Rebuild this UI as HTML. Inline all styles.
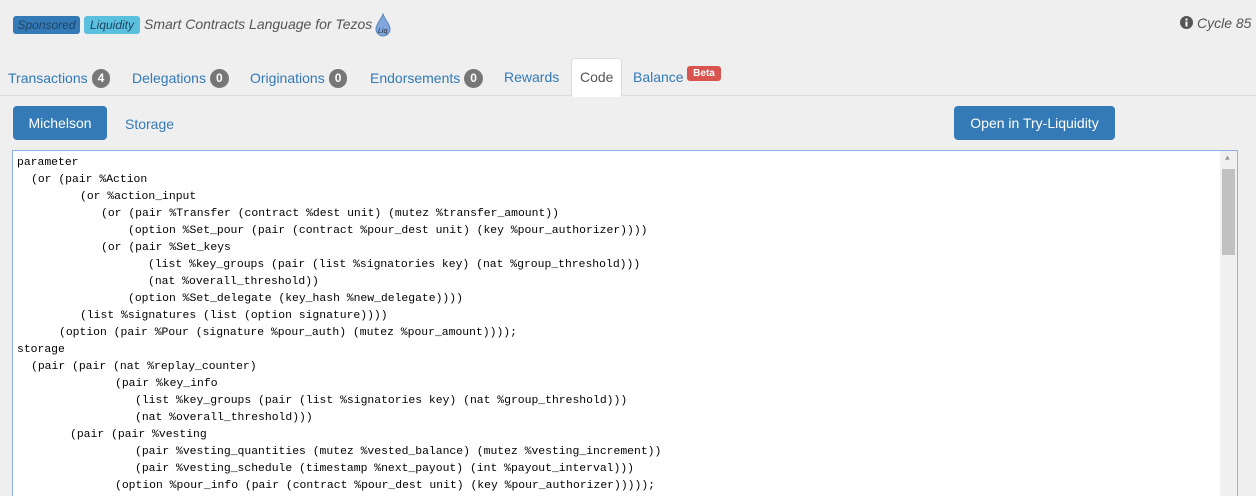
<!DOCTYPE html>
<html style="overflow:hidden"><head><meta charset="utf-8"><style>
html,body{overflow:hidden}
body{margin:0;width:1256px;height:496px;background:#efefef;font-family:"Liberation Sans",sans-serif;position:relative}
.abs{position:absolute}
.lab{position:absolute;top:16px;height:18px;border-radius:3px;font:italic 12px/18px "Liberation Sans",sans-serif;color:#1d4565;text-align:center}
.tab{position:absolute;top:69px;font-size:14px;color:#337ab7;white-space:nowrap}
.badge{display:inline-block;background:#777;color:#fff;font-weight:bold;font-size:12px;border-radius:10px;padding:2px 6px;margin-left:4px;line-height:15px;vertical-align:1px}
.code{position:absolute;left:12px;top:150px;width:1224px;height:360px;background:#fff;border:1px solid #8fb0e8;font:11.4px/17px "Liberation Mono",monospace;color:#000;overflow:hidden}
.code div{position:absolute;white-space:pre}
</style></head><body>
<div class="lab" style="left:13px;width:67px;background:#337ab7">Sponsored</div>
<div class="lab" style="left:84px;width:56px;background:#5bc0de">Liquidity</div>
<div class="abs" style="left:144px;top:16px;font-style:italic;font-size:14px;color:#555;white-space:nowrap">Smart Contracts Language for Tezos</div>
<svg class="abs" style="left:374px;top:13px" width="18" height="24" viewBox="0 0 18 24"><path d="M9 1 C7 7 2 11 2 16 A7 7 0 0 0 16 16 C16 11 11 7 9 1Z" fill="#7fa7dc" stroke="#5a84bf"/><text x="4" y="20" font-size="7" font-style="italic" fill="#223">Liq</text></svg>
<svg class="abs" style="left:1180px;top:16px" width="13" height="13"><circle cx="6.5" cy="6.5" r="6.5" fill="#555"/><rect x="5.5" y="5.5" width="2" height="5" fill="#fff"/><rect x="5.5" y="2.5" width="2" height="2" fill="#fff"/></svg>
<div class="abs" style="left:1197px;top:15px;font-style:italic;font-size:14px;color:#555">Cycle 85</div>
<div class="abs" style="left:0;top:95px;width:1256px;height:1px;background:#ddd"></div>
<div class="abs" style="left:571px;top:58px;width:49px;height:38px;background:#fff;border:1px solid #ddd;border-bottom:none;border-radius:4px 4px 0 0"></div>
<div class="tab" style="left:8px">Transactions<span class="badge">4</span></div>
<div class="tab" style="left:132px">Delegations<span class="badge">0</span></div>
<div class="tab" style="left:250px">Originations<span class="badge">0</span></div>
<div class="tab" style="left:370px">Endorsements<span class="badge">0</span></div>
<div class="tab" style="left:504px">Rewards</div>
<div class="tab" style="left:580px;color:#555">Code</div>
<div class="tab" style="left:633px">Balance</div>
<div class="abs" style="left:687px;top:66px;width:34px;height:15px;background:#d9534f;border-radius:3px;color:#fff;font:bold 10px/15px 'Liberation Sans',sans-serif;text-align:center">Beta</div>
<div class="abs" style="left:13px;top:106px;width:94px;height:34px;background:#337ab7;border-radius:4px;color:#fff;font-size:14px;line-height:34px;text-align:center">Michelson</div>
<div class="abs" style="left:125px;top:116px;font-size:14px;color:#337ab7">Storage</div>
<div class="abs" style="left:954px;top:106px;width:161px;height:34px;background:#337ab7;border-radius:4px;color:#fff;font-size:14px;line-height:34px;text-align:center">Open in Try-Liquidity</div>
<div class="code">
<div style="left:4px;top:4px">parameter</div>
<div style="left:18px;top:21px">(or (pair %Action</div>
<div style="left:67px;top:38px">(or %action_input</div>
<div style="left:88px;top:55px">(or (pair %Transfer (contract %dest unit) (mutez %transfer_amount))</div>
<div style="left:115px;top:72px">(option %Set_pour (pair (contract %pour_dest unit) (key %pour_authorizer))))</div>
<div style="left:88px;top:89px">(or (pair %Set_keys</div>
<div style="left:135px;top:106px">(list %key_groups (pair (list %signatories key) (nat %group_threshold)))</div>
<div style="left:135px;top:123px">(nat %overall_threshold))</div>
<div style="left:115px;top:140px">(option %Set_delegate (key_hash %new_delegate))))</div>
<div style="left:67px;top:157px">(list %signatures (list (option signature))))</div>
<div style="left:46px;top:174px">(option (pair %Pour (signature %pour_auth) (mutez %pour_amount))));</div>
<div style="left:4px;top:191px">storage</div>
<div style="left:18px;top:208px">(pair (pair (nat %replay_counter)</div>
<div style="left:102px;top:225px">(pair %key_info</div>
<div style="left:122px;top:242px">(list %key_groups (pair (list %signatories key) (nat %group_threshold)))</div>
<div style="left:122px;top:259px">(nat %overall_threshold)))</div>
<div style="left:57px;top:276px">(pair (pair %vesting</div>
<div style="left:122px;top:293px">(pair %vesting_quantities (mutez %vested_balance) (mutez %vesting_increment))</div>
<div style="left:122px;top:310px">(pair %vesting_schedule (timestamp %next_payout) (int %payout_interval)))</div>
<div style="left:102px;top:327px">(option %pour_info (pair (contract %pour_dest unit) (key %pour_authorizer)))));</div>
<div style="left:1207px;top:0;width:17px;height:360px;background:#f0f0f0"></div>
<div style="left:1209px;top:18px;width:13px;height:86px;background:#c1c1c1"></div>
<div style="left:1212px;top:2px;font-size:8px;color:#999;line-height:12px">▲</div>
</div>
</body></html>
